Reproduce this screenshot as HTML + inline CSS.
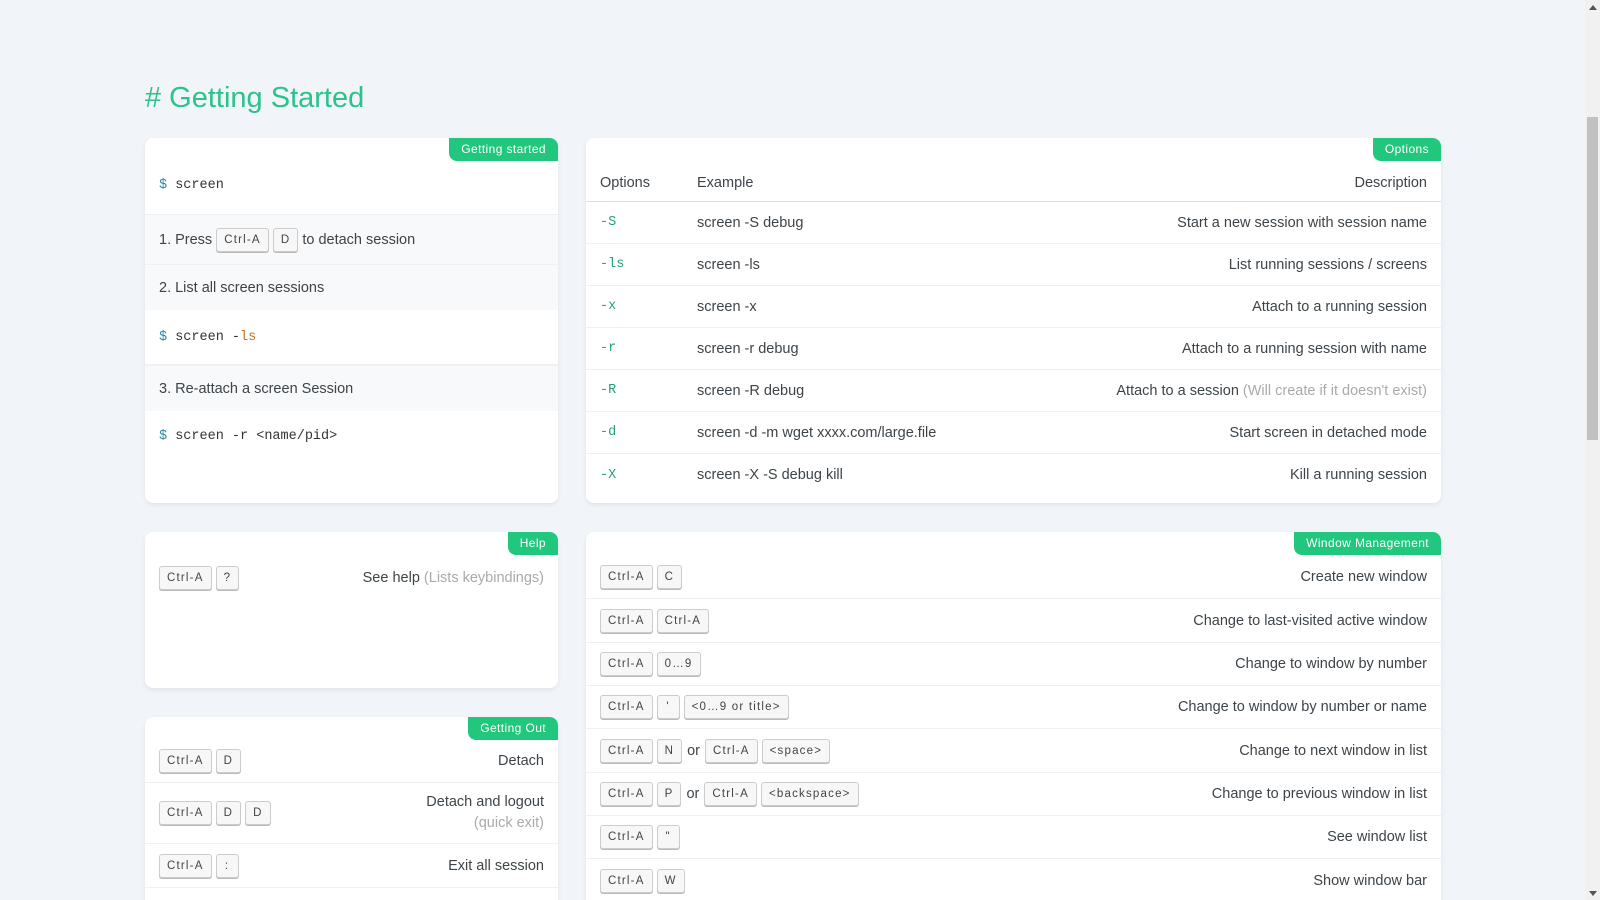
<!DOCTYPE html>
<html><head><meta charset="utf-8"><style>
*{box-sizing:border-box;margin:0;padding:0}
html,body{width:1600px;height:900px;overflow:hidden}
body{background:#f1f4f8;font-family:"Liberation Sans",sans-serif;font-size:14.5px;color:#3d4449}
#w{position:relative;width:1600px;height:900px;overflow:hidden}
h1{position:absolute;left:145px;top:80px;font-weight:normal;font-size:29px;color:#2cc38a;line-height:36px}
.card{position:absolute;background:#fff;border-radius:8px;box-shadow:0 2px 4px rgba(0,0,0,.07);overflow:hidden}
.tag{position:absolute;right:0;top:0;height:23px;line-height:23px;padding:0 12px;background:#21c77c;color:#fff;font-size:12px;letter-spacing:.4px;border-radius:0 8px 0 8px}
.row{position:absolute;left:0;right:0;display:flex;align-items:center;padding:0 14px}
.sep{border-bottom:1px solid #eef0f2}
.gray{background:#f8f9fa}
.mono{font-family:"Liberation Mono",monospace;font-size:13.5px;color:#333}
.d{color:#2b8da3}.o{color:#c0722a}.g{color:#23a07a}
kbd{display:inline-block;height:24px;line-height:22px;padding:0 7px;min-width:23px;text-align:center;font-family:"Liberation Sans",sans-serif;font-size:11.5px;letter-spacing:1.2px;color:#444;background:#f7f7f7;border:1px solid #ccc;border-radius:3px;box-shadow:0 1px 0 #bbb;margin-right:4px}
.sp{flex:1}
.m{color:#aaa}
.or{margin:0 5px 0 1px}
.c1{width:97px}.c2{flex:1}
</style></head><body><div id="w">
<h1># Getting Started</h1>

<div class="card" style="left:145px;top:138px;width:413px;height:365px">
 <div class="tag">Getting started</div>
 <div class="row sep mono" style="top:0;height:77px;padding-top:19px"><span class="d">$</span>&nbsp;screen</div>
 <div class="row sep gray" style="top:77px;height:50px">1. Press&nbsp;<kbd>Ctrl-A</kbd><kbd>D</kbd>to detach session</div>
 <div class="row gray" style="top:127px;height:45px">2. List all screen sessions</div>
 <div class="row sep mono" style="top:172px;height:55px"><span class="d">$</span>&nbsp;screen -<span class="o">ls</span></div>
 <div class="row gray" style="top:227px;height:46px;border-top:1px solid #eef0f2">3. Re-attach a screen Session</div>
 <div class="row mono" style="top:273px;height:51px"><span class="d">$</span>&nbsp;screen -r &lt;name/pid&gt;</div>
</div>

<div class="card" style="left:586px;top:138px;width:855px;height:365px">
 <div class="tag">Options</div>
 <div class="row" style="top:26px;height:38px;border-bottom:1px solid #dcdfe2"><span class="c1">Options</span><span class="c2">Example</span><span>Description</span></div>
 <div class="row sep" style="top:64px;height:42px"><span class="c1 mono g">-S</span><span class="c2">screen -S debug</span><span>Start a new session with session name</span></div>
 <div class="row sep" style="top:106px;height:42px"><span class="c1 mono g">-ls</span><span class="c2">screen -ls</span><span>List running sessions / screens</span></div>
 <div class="row sep" style="top:148px;height:42px"><span class="c1 mono g">-x</span><span class="c2">screen -x</span><span>Attach to a running session</span></div>
 <div class="row sep" style="top:190px;height:42px"><span class="c1 mono g">-r</span><span class="c2">screen -r debug</span><span>Attach to a running session with name</span></div>
 <div class="row sep" style="top:232px;height:42px"><span class="c1 mono g">-R</span><span class="c2">screen -R debug</span><span>Attach to a session <span class="m">(Will create if it doesn't exist)</span></span></div>
 <div class="row sep" style="top:274px;height:42px"><span class="c1 mono g">-d</span><span class="c2">screen -d -m wget xxxx.com/large.file</span><span>Start screen in detached mode</span></div>
 <div class="row" style="top:316px;height:42px"><span class="c1 mono g">-X</span><span class="c2">screen -X -S debug kill</span><span>Kill a running session</span></div>
</div>

<div class="card" style="left:145px;top:532px;width:413px;height:156px">
 <div class="tag">Help</div>
 <div class="row" style="top:24px;height:44px"><kbd>Ctrl-A</kbd><kbd>?</kbd><span class="sp"></span><span>See help <span class="m">(Lists keybindings)</span></span></div>
</div>

<div class="card" style="left:145px;top:717px;width:413px;height:200px">
 <div class="tag">Getting Out</div>
 <div class="row sep" style="top:22px;height:44px"><kbd>Ctrl-A</kbd><kbd>D</kbd><span class="sp"></span><span>Detach</span></div>
 <div class="row sep" style="top:66px;height:61px"><kbd>Ctrl-A</kbd><kbd>D</kbd><kbd>D</kbd><span class="sp"></span><span style="text-align:right;line-height:21px">Detach and logout<br><span class="m">(quick exit)</span></span></div>
 <div class="row sep" style="top:127px;height:44px"><kbd>Ctrl-A</kbd><kbd>:</kbd><span class="sp"></span><span>Exit all session</span></div>
</div>

<div class="card" style="left:586px;top:532px;width:855px;height:400px">
 <div class="tag">Window Management</div>
 <div class="row sep" style="top:24px;height:43px"><kbd>Ctrl-A</kbd><kbd>C</kbd><span class="sp"></span><span>Create new window</span></div>
 <div class="row sep" style="top:67px;height:44px"><kbd>Ctrl-A</kbd><kbd>Ctrl-A</kbd><span class="sp"></span><span>Change to last-visited active window</span></div>
 <div class="row sep" style="top:111px;height:43px"><kbd>Ctrl-A</kbd><kbd>0…9</kbd><span class="sp"></span><span>Change to window by number</span></div>
 <div class="row sep" style="top:154px;height:43px"><kbd>Ctrl-A</kbd><kbd>'</kbd><kbd>&lt;0…9 or title&gt;</kbd><span class="sp"></span><span>Change to window by number or name</span></div>
 <div class="row sep" style="top:197px;height:44px"><kbd>Ctrl-A</kbd><kbd>N</kbd><span class="or">or</span><kbd>Ctrl-A</kbd><kbd>&lt;space&gt;</kbd><span class="sp"></span><span>Change to next window in list</span></div>
 <div class="row sep" style="top:241px;height:43px"><kbd>Ctrl-A</kbd><kbd>P</kbd><span class="or">or</span><kbd>Ctrl-A</kbd><kbd>&lt;backspace&gt;</kbd><span class="sp"></span><span>Change to previous window in list</span></div>
 <div class="row sep" style="top:284px;height:43px"><kbd>Ctrl-A</kbd><kbd>"</kbd><span class="sp"></span><span>See window list</span></div>
 <div class="row" style="top:327px;height:44px"><kbd>Ctrl-A</kbd><kbd>W</kbd><span class="sp"></span><span>Show window bar</span></div>
</div>

<div style="position:absolute;left:1585px;top:0;width:15px;height:900px;background:#f1f1f1"></div>
<div style="position:absolute;left:1587px;top:117px;width:11px;height:323px;background:#c1c1c1"></div>
<div style="position:absolute;left:1589px;top:5px;width:0;height:0;border-left:4px solid transparent;border-right:4px solid transparent;border-bottom:5px solid #555"></div>
<div style="position:absolute;left:1589px;top:891px;width:0;height:0;border-left:4px solid transparent;border-right:4px solid transparent;border-top:5px solid #555"></div>
</div></body></html>
